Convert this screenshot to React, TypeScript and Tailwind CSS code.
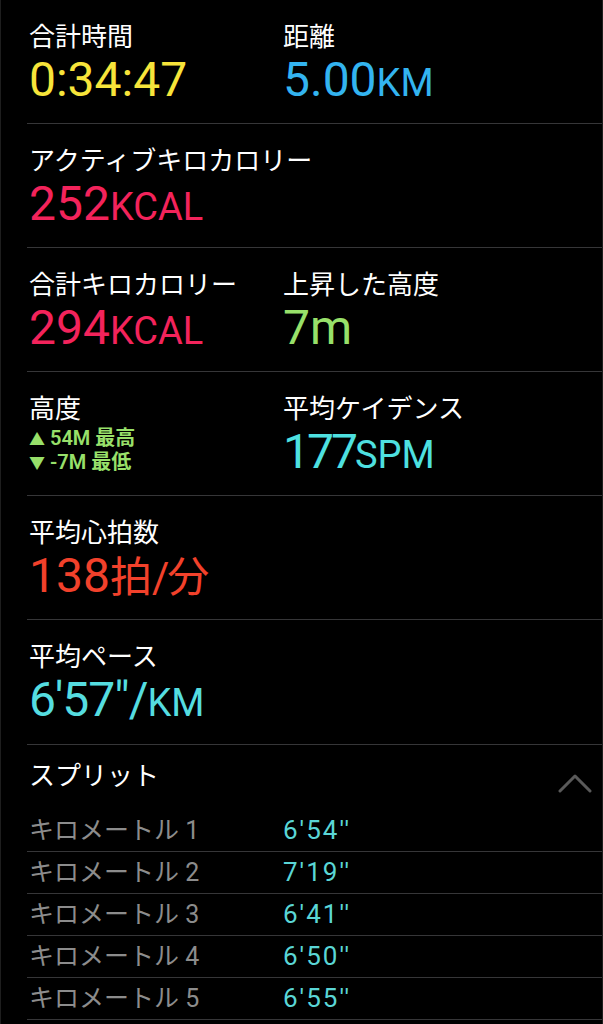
const jp = "font-['Roboto','Noto_Sans_CJK_JP',sans-serif]";

function Label({ children }: { children: React.ReactNode }) {
  return <div className="text-[26px] leading-[32px] text-white">{children}</div>;
}

function Value({ num, unit, color, numClass = "" }: { num: React.ReactNode; unit?: string; color: string; numClass?: string }) {
  return (
    <div className={`mt-[2px] leading-[50px] ${color}`}>
      <span className={`text-[48px] ${numClass}`}>{num}</span>
      {unit && <span className="text-[38px]">{unit}</span>}
    </div>
  );
}

function Section({ children, className = "" }: { children: React.ReactNode; className?: string }) {
  return (
    <div className={`ml-[26px] h-[124px] border-b border-[#363638] pl-[2px] pt-[21px] ${className}`}>
      {children}
    </div>
  );
}

const splits = [
  ["キロメートル 1", "6'54''"],
  ["キロメートル 2", "7'19''"],
  ["キロメートル 3", "6'41''"],
  ["キロメートル 4", "6'50''"],
  ["キロメートル 5", "6'55''"],
];

export default function App() {
  return (
    <div className={`w-[603px] h-[1024px] overflow-hidden bg-black border-x border-[#1e1e1e] ${jp}`}>
      {/* 合計時間 / 距離 */}
      <Section className="flex">
        <div className="w-[254px]">
          <Label>合計時間</Label>
          <Value num="0:34:47" color="text-[#f7e43a]" />
        </div>
        <div>
          <Label>距離</Label>
          <Value num="5.00" unit="KM" color="text-[#33b4f0]" />
        </div>
      </Section>

      <Section>
        <Label>アクティブキロカロリー</Label>
        <Value num="252" unit="KCAL" color="text-[#f3235b]" />
      </Section>

      <Section className="flex">
        <div className="w-[254px]">
          <Label>合計キロカロリー</Label>
          <Value num="294" unit="KCAL" color="text-[#f3235b]" />
        </div>
        <div>
          <Label>上昇した高度</Label>
          <Value num="7m" color="text-[#98e06a]" />
        </div>
      </Section>

      {/* 高度 / ケイデンス */}
      <Section className="flex">
        <div className="w-[254px]">
          <Label>高度</Label>
          <div className="mt-[2px] text-[20px] leading-[22px] font-semibold text-[#98e06a]">
            <div><span className="text-[16px]">▲</span> 54M 最高</div>
            <div><span className="text-[16px]">▼</span> -7M 最低</div>
          </div>
        </div>
        <div>
          <Label>平均ケイデンス</Label>
          <Value num="177" numClass="tracking-[-3px]" unit="SPM" color="text-[#4ee0e0]" />
        </div>
      </Section>

      <Section>
        <Label>平均心拍数</Label>
        <Value
          num={<>138<span className="text-[42px]">拍</span><span className="text-[42px] tracking-[-2px]">/</span><span className="text-[42px]">分</span></>}
          color="text-[#f2412b]"
        />
      </Section>

      <Section className="h-[125px]">
        <Label>平均ペース</Label>
        <Value num={`6'57"/`} numClass="tracking-[-1px]" unit="KM" color="text-[#55dde0]" />
      </Section>

      {/* スプリット */}
      <div className="ml-[26px] pl-[2px]">
        <div className="flex h-[65px] items-start justify-between pt-[15px] pr-[10px]">
          <div className="text-[26px] leading-[32px] text-white">スプリット</div>
          <svg width="34" height="20" viewBox="0 0 34 20" className="mt-[13px]">
            <polyline points="2,18 17,3 32,18" fill="none" stroke="#5a5a5a" strokeWidth="3" strokeLinecap="round" strokeLinejoin="round" />
          </svg>
        </div>
        {splits.map(([k, v]) => (
          <div key={k} className="-ml-[2px] flex h-[42px] items-center border-b border-[#363638] pl-[2px]">
            <div className="w-[254px] text-[25px] text-[#8c8c8c]">{k}</div>
            <div className="text-[26px] tracking-[2px] text-[#5ad6d6]">{v}</div>
          </div>
        ))}
      </div>
    </div>
  );
}
